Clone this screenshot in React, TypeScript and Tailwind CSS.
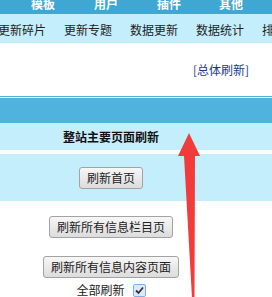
import React from "react";

const font = { fontFamily: '"Noto Sans CJK SC", "Noto Sans", sans-serif' };

function Btn({ children }: { children: React.ReactNode }) {
  return (
    <button className="h-[22px] px-[7px] border border-[#a3a3a3] rounded-[3px] bg-gradient-to-b from-[#f7f7f7] to-[#dcdcdc] text-[12px] leading-[20px] text-[#222]">
      {children}
    </button>
  );
}

export default function App() {
  return (
    <div className="relative w-[272px] h-[297px] overflow-hidden bg-white" style={font}>
      <div className="h-[14px] bg-[#3fa7d2] overflow-hidden flex">
        <div className="flex -mt-[4px] text-[12px] leading-[16px] font-bold text-white">
          <span className="ml-[31px]">模板</span>
          <span className="ml-[39px]">用户</span>
          <span className="ml-[39px]">插件</span>
          <span className="ml-[38px]">其他</span>
        </div>
      </div>
      <div className="h-[29px] bg-[#c5eefc] flex items-center whitespace-nowrap text-[12px] text-[#222]">
        <div className="flex gap-[18px] -ml-[2px] pt-[2px]">
          <span>更新碎片</span>
          <span>更新专题</span>
          <span>数据更新</span>
          <span>数据统计</span>
          <span>排</span>
        </div>
      </div>
      <div className="h-[53px] flex items-center justify-end pr-[23px] pt-[1px]">
        <span className="text-[12px] text-[#1d3a8a]">[总体刷新]</span>
      </div>
      <div className="h-[1px] bg-[#4fb3de]" />
      <div className="h-[1px] bg-white" />
      <div className="h-[25px] bg-[#4fb3de]" />
      <div className="h-[27px] bg-[#c5eefc] flex items-center">
        <div className="w-[222px] text-center text-[12px] font-bold text-[#111]">整站主要页面刷新</div>
      </div>
      <div className="h-[4px] bg-white" />
      <div className="h-[47px] bg-[#c5eefc] flex items-center">
        <div className="w-[222px] flex justify-center pt-[1px]">
          <Btn>刷新首页</Btn>
        </div>
      </div>
      <div className="w-[222px] flex flex-col items-center pt-[15px]">
        <Btn>刷新所有信息栏目页</Btn>
        <div className="h-[18px]" />
        <Btn>刷新所有信息内容页面</Btn>
        <div className="flex items-center mt-[4px] text-[12px] text-[#222]">
          <span className="leading-[16px]">全部刷新</span>
          <span className="ml-[8px] w-[13px] h-[13px] border border-[#7fb0e6] bg-[#dde9f8] rounded-[2px] flex items-center justify-center">
            <svg width="9" height="9" viewBox="0 0 9 9">
              <path d="M1 4.5 L3.5 7 L8 1.5" stroke="#333" strokeWidth="1.8" fill="none" />
            </svg>
          </span>
        </div>
      </div>
      <svg className="absolute left-0 top-0 pointer-events-none" width="272" height="297" viewBox="0 0 272 297">
        <polygon points="189,133 200,156 195,156 194.5,298 192,298 184,156 178,156" fill="#f23c3c" />
      </svg>
    </div>
  );
}
